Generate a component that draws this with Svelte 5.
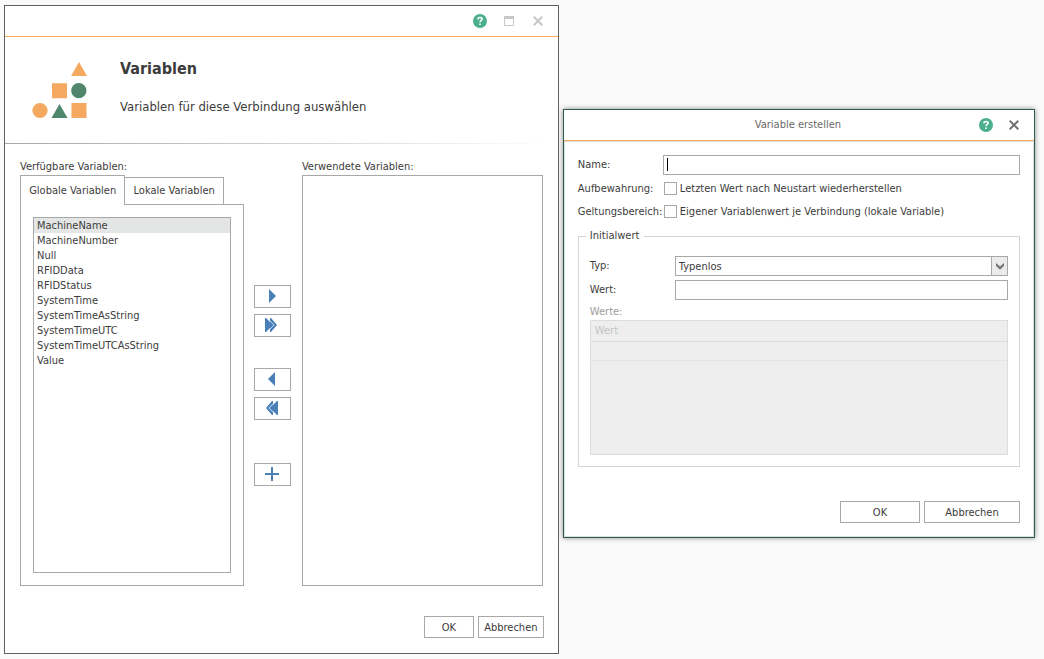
<script>
  const globals = [
    'MachineName', 'MachineNumber', 'Null', 'RFIDData', 'RFIDStatus',
    'SystemTime', 'SystemTimeAsString', 'SystemTimeUTC', 'SystemTimeUTCAsString', 'Value'
  ];

  let tab = $state('global');
  let available = $state([...globals]);
  let used = $state([]);
  let picked = $state(['MachineName']);
  let pickedUsed = $state([]);

  function add(names) {
    used = [...used, ...names];
    available = globals.filter((n) => !used.includes(n));
    picked = [];
  }

  function remove(names) {
    used = used.filter((n) => !names.includes(n));
    available = globals.filter((n) => !used.includes(n));
    pickedUsed = [];
  }
</script>

{#snippet help()}
  <button class="tool" type="button" aria-label="Hilfe">
    <svg width="14" height="14" viewBox="0 0 14 14">
      <circle cx="7" cy="7" r="7" fill="#4caf8b" />
      <path d="M5 5.5V5C5 3.9 5.9 3.5 7 3.5s2.1.5 2.1 1.6C9.100 6.500 7 6.400 7 8.200M7 9.400v1.500" fill="none" stroke="#fff" stroke-width="1.600" />
    </svg>
  </button>
{/snippet}

{#snippet cross(color)}
  <svg width="10" height="10" viewBox="0 0 10 10">
    <path d="M.7.7 9.300 9.300M9.300.7.7 9.300" fill="none" stroke={color} stroke-width="2" />
  </svg>
{/snippet}

<main class="desktop">
  <section class="window chooser" aria-labelledby="chooser-title">
    <header class="titlebar">
      {@render help()}
      <button class="tool" type="button" aria-label="Maximieren">
        <svg width="10" height="10" viewBox="0 0 10 10">
          <path d="M.5 0v9.500h9V0" fill="none" stroke="#c8c8c8" />
          <path d="M0 0h10v3H0z" fill="#c8c8c8" />
        </svg>
      </button>
      <button class="tool" type="button" aria-label="Schließen">{@render cross('#c8c8c8')}</button>
    </header>

    <div class="banner">
      <svg class="logo" width="56" height="57" viewBox="0 0 56 57">
        <g fill="#f5a860">
          <path d="M47 0 55 14H39z" />
          <path d="M20 21.300h15v15H20zM39.500 41h15v15h-15z" />
          <circle cx="8" cy="48.500" r="7.600" />
        </g>
        <g fill="#50866c">
          <circle cx="46.800" cy="28.700" r="7.600" />
          <path d="M27.500 42 35.500 56h-16z" />
        </g>
      </svg>
      <div>
        <h1 id="chooser-title">Variablen</h1>
        <p>Variablen für diese Verbindung auswählen</p>
      </div>
    </div>

    <div class="lists">
      <div class="column">
        <label for="available">Verfügbare Variablen:</label>
        <div class="tabs" role="tablist">
          <button type="button" role="tab" class="tab" class:active={tab === 'global'} aria-selected={tab === 'global'} onclick={() => (tab = 'global')}>Globale Variablen</button>
          <button type="button" role="tab" class="tab" class:active={tab === 'local'} aria-selected={tab === 'local'} onclick={() => (tab = 'local')}>Lokale Variablen</button>
        </div>
        <div class="panel">
          <select id="available" class="listbox" multiple bind:value={picked}>
            {#each tab === 'global' ? available : [] as name (name)}
              <option value={name}>{name}</option>
            {/each}
          </select>
        </div>
      </div>

      <div class="transfer">
        <button type="button" class="btn" aria-label="Hinzufügen" onclick={() => add(picked)}>
          <svg width="16" height="14" viewBox="0 0 16 14"><path d="M5 0l7 7-7 7z" /></svg>
        </button>
        <button type="button" class="btn" aria-label="Alle hinzufügen" onclick={() => add(available)}>
          <svg width="16" height="14" viewBox="0 0 16 14"><path d="M1 0h1l4 4V0h1l6 7-6 7H6v-4l-4 4H1z" /><path class="gap" d="M5.500 2.500 10 7l-4.500 4.500" /></svg>
        </button>
        <button type="button" class="btn back" aria-label="Entfernen" onclick={() => remove(pickedUsed)}>
          <svg width="16" height="14" viewBox="0 0 16 14"><path d="M11 0 4 7l7 7z" /></svg>
        </button>
        <button type="button" class="btn" aria-label="Alle entfernen" onclick={() => remove(used)}>
          <svg width="16" height="14" viewBox="0 0 16 14"><path d="M14 0h-1L9 4V0H8L2 7l6 7h1v-4l4 4h1z" /><path class="gap" d="M9.500 2.500 5 7l4.500 4.500" /></svg>
        </button>
        <button type="button" class="btn new" aria-label="Neue Variable">
          <svg width="16" height="14" viewBox="0 0 16 14"><path d="M7 0h2v6h6v2H9v6H7V8H1V6h6z" /></svg>
        </button>
      </div>

      <div class="column right">
        <label for="used">Verwendete Variablen:</label>
        <select id="used" class="listbox" multiple bind:value={pickedUsed}>
          {#each used as name (name)}
            <option value={name}>{name}</option>
          {/each}
        </select>
      </div>
    </div>

    <footer class="actions">
      <button type="button" class="btn ok">OK</button>
      <button type="button" class="btn cancel">Abbrechen</button>
    </footer>
  </section>

  <form class="window creator" aria-labelledby="creator-title">
    <header class="titlebar">
      <h2 id="creator-title">Variable erstellen</h2>
      {@render help()}
      <button class="tool" type="button" aria-label="Schließen">{@render cross('#737373')}</button>
    </header>

    <div class="body">
      <div class="row">
        <label for="name">Name:</label>
        <input id="name" class="field caret" type="text" />
      </div>
      <div class="row check">
        <span>Aufbewahrung:</span>
        <label><input type="checkbox" />Letzten Wert nach Neustart wiederherstellen</label>
      </div>
      <div class="row check">
        <span>Geltungsbereich:</span>
        <label><input type="checkbox" />Eigener Variablenwert je Verbindung (lokale Variable)</label>
      </div>

      <fieldset>
        <legend>Initialwert</legend>
        <div class="row">
          <label for="type">Typ:</label>
          <div class="combo">
            <select id="type" class="field">
              <option>Typenlos</option>
            </select>
            <span class="arrow">
              <svg width="8" height="7" viewBox="0 0 8 7"><path d="M0 0 4 3.500 8 0v2.800L4 6.800 0 2.800z" fill="#737373" /></svg>
            </span>
          </div>
        </div>
        <div class="row">
          <label for="value">Wert:</label>
          <input id="value" class="field" type="text" />
        </div>
        <div class="caption" id="values">Werte:</div>
        <div class="grid">
          <table aria-labelledby="values">
            <thead><tr><th scope="col">Wert</th></tr></thead>
            <tbody><tr><td></td></tr></tbody>
          </table>
        </div>
      </fieldset>

      <footer class="actions">
        <button type="button" class="btn ok">OK</button>
        <button type="button" class="btn cancel">Abbrechen</button>
      </footer>
    </div>
  </form>
</main>

<style>
  :global(body) {
    margin: 0;
    background: #fafafa;
  }

  .desktop,
  .desktop * {
    box-sizing: border-box;
  }

  .desktop {
    display: flex;
    align-items: flex-start;
    gap: 4px;
    min-height: 100vh;
    padding: 5px 9px 5px 4px;
    color: #3c3c3c;
    font: 11px/14px "DejaVu Sans Condensed", "DejaVu Sans", sans-serif;
  }

  button,
  input,
  select {
    margin: 0;
    color: inherit;
    font: inherit;
  }

  .window {
    display: flex;
    flex-direction: column;
    min-width: 0;
    background: #fff;
  }

  .chooser {
    flex: 555 1 0;
    align-self: stretch;
    border: 1px solid #606060;
  }

  .creator {
    flex: 472 1 0;
    margin-top: 104px;
    border: 1px solid #2f5c4c;
    box-shadow: 0 0 5px rgb(0 0 0 / 45%);
  }

  .titlebar {
    display: flex;
    align-items: center;
    justify-content: flex-end;
    gap: 9px;
    height: 31px;
    padding-right: 10px;
    border-bottom: 1px solid #fcac58;
  }

  .creator .titlebar {
    gap: 8px;
  }

  .titlebar h2 {
    flex: 1;
    margin: 0;
    padding-left: 64px;
    color: #6a6a6a;
    font-size: 11px;
    font-weight: 400;
    text-align: center;
  }

  .tool {
    display: grid;
    place-items: center;
    width: 20px;
    height: 20px;
    padding: 0;
    border: 0;
    background: none;
  }

  .banner {
    display: flex;
    gap: 32px;
    padding: 20px 27px 24px;
    border-bottom: 1px solid;
    border-image: linear-gradient(to right, #a8a8a8, #d0d0d0 50%, #fff 98%) 1;
  }

  .logo {
    flex: none;
    margin-top: 5px;
  }

  h1 {
    margin: 0;
    font-size: 16px;
    font-weight: 700;
    line-height: 24px;
  }

  .banner p {
    margin: 16px 0 0;
    font-size: 13px;
    line-height: 20px;
  }

  .lists {
    display: flex;
    flex: 1;
    padding: 15px;
  }

  .column {
    display: flex;
    flex: 224 1 0;
    flex-direction: column;
    min-width: 0;
  }

  .column.right {
    flex: 241 1 0;
  }

  .column > label {
    line-height: 16px;
  }

  .tabs {
    display: flex;
    align-items: flex-end;
    padding-right: 20px;
  }

  .tab {
    flex: 1 1 auto;
    height: 27px;
    padding: 0;
    border: 1px solid #a8a8a8;
    border-bottom: 0;
    background: #fff;
    white-space: nowrap;
  }

  .tab + .tab {
    margin-left: -1px;
  }

  .tab.active {
    position: relative;
    height: 30px;
    margin-bottom: -1px;
  }

  .panel {
    display: flex;
    flex: 1;
    padding: 12px;
    border: 1px solid #a8a8a8;
  }

  .listbox {
    flex: 1;
    width: 100%;
    min-height: 160px;
    padding: 0;
    border: 1px solid #a8a8a8;
    border-radius: 0;
    outline: 0;
    background: #fff;
  }

  .listbox option {
    height: 15px;
    min-height: 15px;
    padding: 1px 3px 0;
    border-radius: 0;
    line-height: 14px;
  }

  .listbox option:checked {
    background: #e4e6e5 linear-gradient(#e4e6e5, #e4e6e5);
    color: #3c3c3c;
  }

  .transfer {
    display: flex;
    flex-direction: column;
    gap: 6px;
    padding: 126px 11px 0 10px;
  }

  .btn {
    display: grid;
    place-items: center;
    height: 22px;
    padding: 1px 0 0;
    border: 1px solid #a8a8a8;
    background: #fff;
  }

  .transfer .btn {
    width: 37px;
    height: 23px;
    padding: 0 0 2px;
  }

  .transfer .back {
    margin-top: 25px;
  }

  .transfer .new {
    margin-top: 37px;
  }

  .transfer path {
    fill: #4a80b8;
  }

  .transfer .gap {
    fill: none;
    stroke: #c4d8ec;
  }

  .actions {
    display: flex;
    justify-content: flex-end;
    gap: 4px;
  }

  .chooser .actions {
    padding: 15px 14px;
  }

  .chooser .ok {
    width: 50px;
  }

  .chooser .cancel {
    width: 66px;
  }

  .body {
    padding: 13px;
    border: 1px solid #dcdcdc;
  }

  .row {
    display: grid;
    grid-template-columns: 85px 1fr;
    align-items: center;
    margin-bottom: 4px;
  }

  .check {
    height: 19px;
  }

  .check label {
    display: flex;
    align-items: center;
    gap: 3px;
    padding-left: 1px;
    white-space: nowrap;
  }

  input[type='checkbox'] {
    width: 13px;
    height: 13px;
    border: 1px solid #a8a8a8;
    background: #fff;
    appearance: none;
  }

  input[type='checkbox']:checked {
    box-shadow: inset 0 0 0 2px #fff;
    background: #50866c;
  }

  .field {
    width: 100%;
    height: 20px;
    padding: 1px 3px 0;
    border: 1px solid #a8a8a8;
    border-radius: 0;
    outline: 0;
    background: #fff;
    appearance: none;
  }

  .caret {
    background: linear-gradient(#000, #000) 3px 2px / 1px 13px no-repeat #fff;
  }

  .caret:focus {
    background: #fff;
  }

  fieldset {
    min-width: 0;
    margin: 8px 0 0;
    padding: 13px 11px 11px;
    border: 1px solid #d4d4d4;
  }

  legend {
    margin-left: -4px;
    padding: 0 5px 0 4px;
  }

  .combo {
    display: grid;
  }

  .combo > * {
    grid-area: 1 / 1;
  }

  .arrow {
    display: grid;
    place-items: center;
    justify-self: end;
    width: 17px;
    height: 20px;
    border: 1px solid #a8a8a8;
    background: #ebebeb;
    pointer-events: none;
  }

  .caption {
    line-height: 16px;
    color: #9c9c9c;
  }

  .grid {
    height: 135px;
    border: 1px solid #dcdcdc;
    background: #eee;
  }

  table {
    width: 100%;
    border-collapse: collapse;
  }

  th {
    height: 20px;
    padding: 0 4px;
    border-bottom: 1px solid #dcdcdc;
    color: #c4c4c4;
    font-weight: 400;
    text-align: left;
  }

  td {
    height: 19px;
    padding: 0;
    border-bottom: 1px solid #e4e4e4;
  }

  .body .actions {
    margin-top: 34px;
  }

  .body .ok {
    width: 80px;
  }

  .body .cancel {
    width: 96px;
  }
</style>
